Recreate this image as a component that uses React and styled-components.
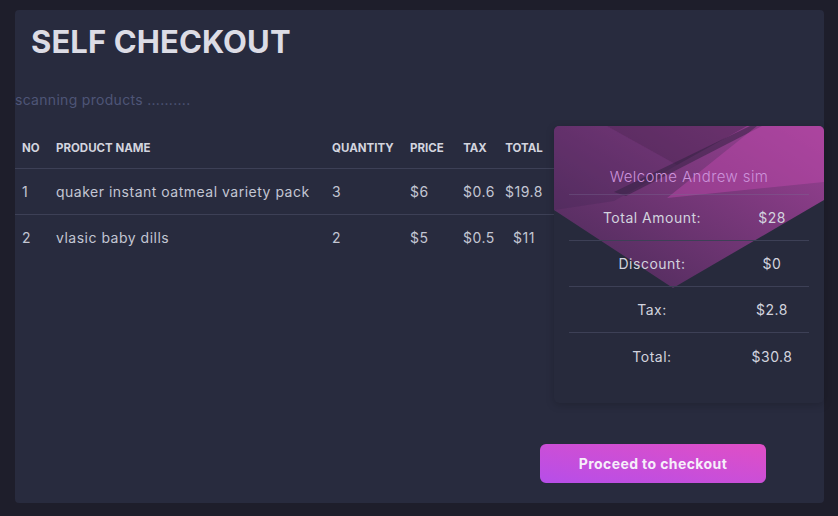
import React from 'react'
import styled, { createGlobalStyle } from 'styled-components'

const Global = createGlobalStyle`
  html, body { margin: 0; padding: 0; background: #1e1e2b; }
  body { font-family: Inter, "Noto Sans", sans-serif; }
  * { box-sizing: border-box; }
`

const Page = styled.div`
  width: 838px;
  height: 516px;
  padding: 10px 14px 13px 15px;
  display: flex;
`

const Card = styled.div`
  flex: 1;
  background: #282b3e;
  border-radius: 4px;
  display: flex;
  flex-direction: column;
`

const Title = styled.h1`
  margin: 0;
  padding: 13px 0 0 16px;
  height: 62px;
  font-size: 31px;
  font-weight: 700;
  color: #dcdce5;
  letter-spacing: 0.1px;
`

const Status = styled.div`
  height: 54px;
  padding-top: 19px;
  font-size: 14px;
  letter-spacing: 0.3px;
  color: #4e5577;
`

const Main = styled.div`
  display: flex;
  align-items: flex-start;
`

const Table = styled.table`
  width: 539px;
  table-layout: fixed;
  border-collapse: collapse;
  margin-top: 2px;
`

const Th = styled.th`
  width: ${p => p.w}px;
  height: 40px;
  padding: 0 7px;
  text-align: ${p => p.align || 'left'};
  font-size: 11.5px;
  font-weight: 700;
  color: #d3d4de;
  text-transform: uppercase;
  white-space: nowrap;
  border-bottom: 1px solid #3d4056;
`

const Row = styled.tr`
  & + & td { border-top: 1px solid #3d4056; }
`

const Td = styled.td`
  height: 46px;
  padding: 0 7px;
  text-align: ${p => p.align || 'left'};
  font-size: 14px;
  letter-spacing: 0.5px;
  color: #c3c6d3;
  white-space: nowrap;
`

const Panel = styled.div`
  position: relative;
  width: 270px;
  height: 277px;
  background: #272a3c;
  border-radius: 5px;
  box-shadow: 0 2px 8px rgba(0, 0, 0, 0.18);
  overflow: hidden;
`

const Decor = styled.svg`
  position: absolute;
  inset: 0;
`

const PanelBody = styled.div`
  position: relative;
  padding: 42px 15px 0;
`

const Welcome = styled.div`
  height: 27px;
  line-height: 18px;
  text-align: center;
  font-size: 15px;
  font-weight: 300;
  letter-spacing: 0.4px;
  color: #cc92da;
  border-bottom: 1px solid rgba(120, 110, 150, 0.35);
`

const SumRow = styled.div`
  display: grid;
  grid-template-columns: 166px 1fr;
  align-items: center;
  height: 46px;
  font-size: 14px;
  letter-spacing: 0.5px;
  color: #d2d3de;
  text-align: center;
  border-bottom: ${p => (p.last ? 'none' : '1px solid #3d4056')};
`

const Footer = styled.div`
  margin-top: auto;
  display: flex;
  justify-content: flex-end;
  padding: 0 58px 20px 0;
`

const Button = styled.button`
  width: 226px;
  height: 39px;
  border: none;
  border-radius: 6px;
  background: linear-gradient(to top right, #b64ee9, #e04fc5);
  color: #f6eefa;
  font-family: inherit;
  font-size: 14px;
  font-weight: 700;
  letter-spacing: 0.4px;
  cursor: pointer;
`

const columns = [
  { key: 'no', label: 'No', w: 34 },
  { key: 'name', label: 'Product Name', w: 276 },
  { key: 'qty', label: 'Quantity', w: 78 },
  { key: 'price', label: 'Price', w: 53 },
  { key: 'tax', label: 'Tax', w: 38, align: 'center' },
  { key: 'total', label: 'Total', w: 60, align: 'center' },
]

const products = [
  { no: 1, name: 'quaker instant oatmeal variety pack', qty: 3, price: '$6', tax: '$0.6', total: '$19.8' },
  { no: 2, name: 'vlasic baby dills', qty: 2, price: '$5', tax: '$0.5', total: '$11' },
]

const summary = [
  ['Total Amount:', '$28'],
  ['Discount:', '$0'],
  ['Tax:', '$2.8'],
  ['Total:', '$30.8'],
]

const PanelDecor = () => (
  <Decor width="270" height="277" viewBox="0 0 270 277">
    <defs>
      <linearGradient id="g1" x1="0" y1="1" x2="1" y2="0">
        <stop offset="0" stopColor="#4a2a58" />
        <stop offset="1" stopColor="#a9449f" />
      </linearGradient>
    </defs>
    <polygon points="0,0 270,0 270,74 119,162 0,84" fill="url(#g1)" opacity="0.9" />
    <polygon points="0,0 53,0 123,39 60,75 0,84" fill="#3a2450" opacity="0.25" />
    <polygon points="53,0 193,0 123,39" fill="#3b2248" opacity="0.45" />
    <polygon points="196,0 208,0 72,70 60,66" fill="#2e203e" opacity="0.5" />
    <polygon points="203,0 270,0 270,56 113,72" fill="#c04aae" opacity="0.45" />
  </Decor>
)

export default function App() {
  return (
    <>
      <Global />
      <Page>
        <Card>
          <Title>SELF CHECKOUT</Title>
          <Status>scanning products ..........</Status>
          <Main>
            <Table>
              <thead>
                <tr>
                  {columns.map(c => (
                    <Th key={c.key} w={c.w} align={c.align}>{c.label}</Th>
                  ))}
                </tr>
              </thead>
              <tbody>
                {products.map(p => (
                  <Row key={p.no}>
                    {columns.map(c => (
                      <Td key={c.key} align={c.align}>{p[c.key]}</Td>
                    ))}
                  </Row>
                ))}
              </tbody>
            </Table>
            <Panel>
              <PanelDecor />
              <PanelBody>
                <Welcome>Welcome Andrew sim</Welcome>
                {summary.map(([label, value], i) => (
                  <SumRow key={label} last={i === summary.length - 1}>
                    <span>{label}</span>
                    <span>{value}</span>
                  </SumRow>
                ))}
              </PanelBody>
            </Panel>
          </Main>
          <Footer>
            <Button>Proceed to checkout</Button>
          </Footer>
        </Card>
      </Page>
    </>
  )
}
